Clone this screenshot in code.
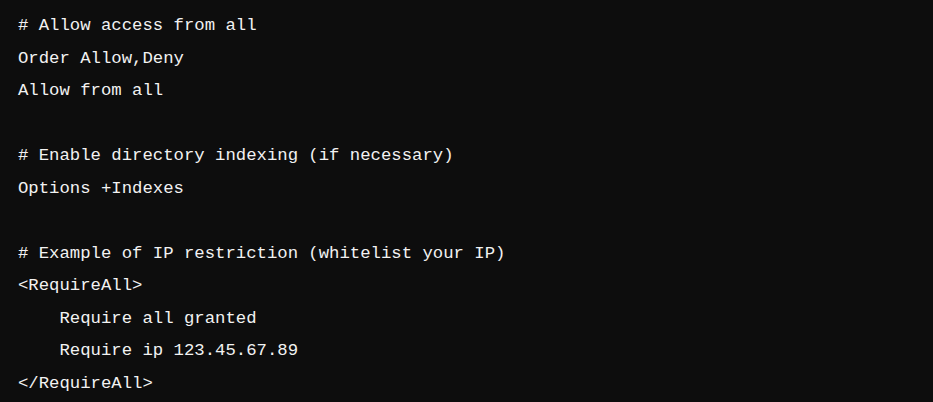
import React from 'react';

const code = `# Allow access from all
Order Allow,Deny
Allow from all

# Enable directory indexing (if necessary)
Options +Indexes

# Example of IP restriction (whitelist your IP)
<RequireAll>
    Require all granted
    Require ip 123.45.67.89
</RequireAll>`;

export default function App() {
  return (
    <div className="w-[933px] h-[402px] bg-[#0d0d0d] overflow-hidden">
      <pre className="pl-[18px] pt-[10px] text-[17.3px] leading-[32.5px] text-[#f2f2f2] font-['Liberation_Mono',monospace] whitespace-pre">
        {code}
      </pre>
    </div>
  );
}
